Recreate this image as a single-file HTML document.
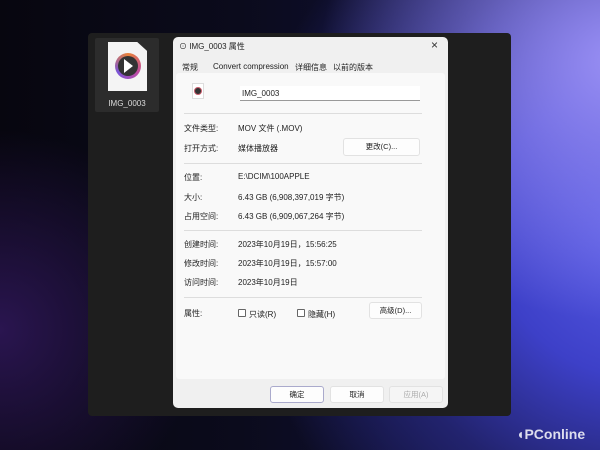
<!DOCTYPE html><html><head><meta charset="utf-8"><style>
*{margin:0;padding:0;box-sizing:border-box}
body{width:600px;height:450px;overflow:hidden;position:relative;font-family:"Liberation Sans","Noto Sans CJK SC",sans-serif;font-size:8px;color:#222;
background:radial-gradient(ellipse 300px 260px at 620px 60px,#9a90f5 0%,rgba(120,110,240,0) 100%),radial-gradient(ellipse 420px 420px at 640px 230px,#5a5ee8 0%,#3d40c8 35%,#22236e 65%,rgba(10,10,30,0) 95%),radial-gradient(ellipse 200px 200px at 0px 330px,#2a1550 0%,rgba(20,10,40,0) 100%),linear-gradient(90deg,#07060f 0%,#0b0b1c 40%,#14144a 100%);}
.panel{position:absolute;left:88px;top:33px;width:423px;height:383px;background:#1e1e1e;border-radius:4px}
.fileic{position:absolute;left:95px;top:38px;width:64px;height:74px;background:#2c2c2c;border-radius:2px}
.doc{position:absolute;left:108px;top:42px;width:39px;height:49px;background:#f4f4f4;clip-path:polygon(0 0,75% 0,100% 18%,100% 100%,0 100%)}
.circ{position:absolute;left:115px;top:53px;width:26px;height:26px;border-radius:50%;background:conic-gradient(#e9823a,#c04aa0,#7a54d8,#e9823a)}
.circ i{position:absolute;left:3px;top:3px;width:20px;height:20px;border-radius:50%;background:#333}
.circ b{position:absolute;left:9px;top:6px;border-left:9px solid #fff;border-top:7px solid transparent;border-bottom:7px solid transparent}
.fname{position:absolute;left:95px;top:99px;width:64px;text-align:center;color:#ddd;font-size:8px}
.dlg{position:absolute;left:173px;top:37px;width:275px;height:371px;background:#f0f0f0;border-radius:5px;overflow:hidden}
.content{position:absolute;left:3px;top:36px;width:269px;height:306px;background:#f9f9f9;border-radius:3px}
.t{position:absolute;white-space:nowrap}
.line{position:absolute;left:8px;width:238px;height:1px;background:#ddd}
.btn{position:absolute;background:#fdfdfd;border:1px solid #e2e2e2;border-radius:3px;text-align:center;line-height:16px;font-size:7.5px}
.cb{position:absolute;width:8px;height:8px;border:1px solid #666;border-radius:1px;background:#fff}
</style></head><body>
<div class="panel"></div>
<div class="fileic"></div><div class="doc"></div><div class="circ"><i></i><b></b></div>
<div class="fname">IMG_0003</div>
<div class="dlg">
 <div class="t" style="left:6px;top:4px;font-size:8px">⊙ IMG_0003 属性</div>
 <div class="t" style="left:258px;top:1px;font-size:12px;color:#333">×</div>
 <div class="t" style="left:9px;top:25px">常规</div>
 <div class="t" style="left:40px;top:25px">Convert compression</div>
 <div class="t" style="left:122px;top:25px">详细信息</div>
 <div class="t" style="left:160px;top:25px">以前的版本</div>
 <div class="content">
  <div style="position:absolute;left:16px;top:10px;width:12px;height:16px;background:#fff;border:1px solid #ddd"></div>
  <div style="position:absolute;left:18px;top:14px;width:8px;height:8px;border-radius:50%;background:#333;border:1px solid #c65a6a"></div>
  <div style="position:absolute;left:64px;top:13px;width:180px;height:15px;background:#fff;border-bottom:1px solid #999"></div>
  <div class="t" style="left:66px;top:16px">IMG_0003</div>
  <div class="line" style="top:40px"></div>
  <div class="t" style="left:8px;top:50px">文件类型:</div><div class="t" style="left:62px;top:50px">MOV 文件 (.MOV)</div>
  <div class="t" style="left:8px;top:70px">打开方式:</div><div class="t" style="left:62px;top:70px">媒体播放器</div>
  <div class="btn" style="left:167px;top:65px;width:77px;height:18px">更改(C)...</div>
  <div class="line" style="top:90px"></div>
  <div class="t" style="left:8px;top:99px">位置:</div><div class="t" style="left:62px;top:99px">E:\DCIM\100APPLE</div>
  <div class="t" style="left:8px;top:119px">大小:</div><div class="t" style="left:62px;top:119px">6.43 GB (6,908,397,019 字节)</div>
  <div class="t" style="left:8px;top:138px">占用空间:</div><div class="t" style="left:62px;top:138px">6.43 GB (6,909,067,264 字节)</div>
  <div class="line" style="top:157px"></div>
  <div class="t" style="left:8px;top:166px">创建时间:</div><div class="t" style="left:62px;top:166px">2023年10月19日，15:56:25</div>
  <div class="t" style="left:8px;top:185px">修改时间:</div><div class="t" style="left:62px;top:185px">2023年10月19日，15:57:00</div>
  <div class="t" style="left:8px;top:204px">访问时间:</div><div class="t" style="left:62px;top:204px">2023年10月19日</div>
  <div class="line" style="top:224px"></div>
  <div class="t" style="left:8px;top:235px">属性:</div>
  <div class="cb" style="left:62px;top:236px"></div><div class="t" style="left:73px;top:236px">只读(R)</div>
  <div class="cb" style="left:121px;top:236px"></div><div class="t" style="left:132px;top:236px">隐藏(H)</div>
  <div class="btn" style="left:193px;top:229px;width:53px;height:17px">高级(D)...</div>
 </div>
 <div class="btn" style="left:97px;top:349px;width:54px;height:17px;border-color:#aac">确定</div>
 <div class="btn" style="left:157px;top:349px;width:54px;height:17px">取消</div>
 <div class="btn" style="left:216px;top:349px;width:54px;height:17px;color:#aaa;background:#f5f5f5">应用(A)</div>
</div>
<div class="t" style="left:516px;top:426px;font-size:14px;color:#dde;font-weight:bold">◖PConline</div>
</body></html>
